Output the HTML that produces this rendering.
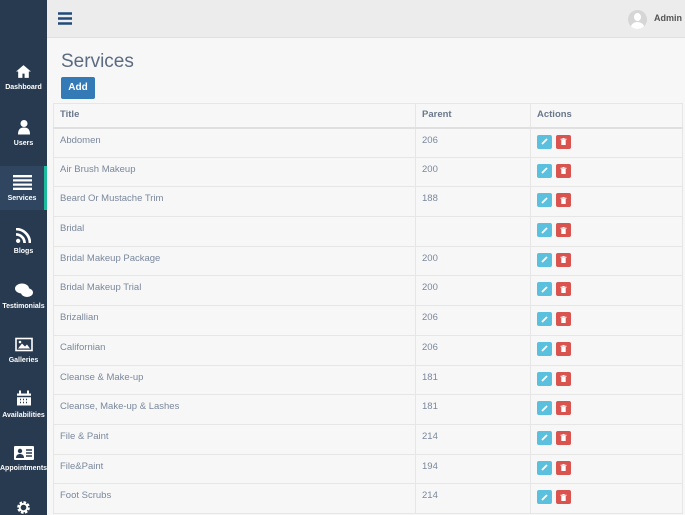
<!DOCTYPE html><html><head><style>
*{margin:0;padding:0;box-sizing:border-box}
html,body{width:685px;height:515px;overflow:hidden}
body{background:#f7f7f7;font-family:"Liberation Sans",sans-serif;position:relative}
.sb{position:absolute;left:0;top:0;width:47px;height:515px;background:#283a50}
.it{position:absolute;left:0;width:47px;height:44px;text-align:center;color:#fff;font-size:7px;font-weight:bold}
.it svg{display:block;margin:0 auto 5px}
.act{background:#2f4560;border-right:3px solid #1abc9c}
.hd{position:absolute;left:47px;top:0;right:0;height:38px;background:#ececec;border-bottom:1px solid #e0e0e0}
h1{position:absolute;left:61px;top:51px;font-size:19px;font-weight:normal;color:#5b6b82}
.add{position:absolute;left:61px;top:77px;width:34px;height:22px;background:#337ab7;color:#fff;font-size:10px;font-weight:bold;text-align:center;line-height:22px;border-radius:2px}
table{position:absolute;left:53px;top:103px;width:630px;border-collapse:collapse;font-size:9.5px;color:#7a889c}
td,th{border:1px solid #e6e6e6;padding:0 6px;text-align:left;vertical-align:top}
th{height:24px;line-height:22px;font-weight:bold;color:#6a788c;border-bottom:2px solid #e0e0e0}
td{height:29.7px;padding-top:6px}
.b{display:inline-block;width:15px;height:14px;border-radius:2px;margin-right:2px;vertical-align:top;margin-top:0;position:relative}
.b svg{position:absolute;left:4px;top:3.5px}
.e{background:#5bc0de}.d{background:#d9534f;margin-left:2px}
</style></head><body>
<div class="sb">
<div class="it" style="top:64px"><svg width="17" height="15" viewBox="0 0 16 14"><path d="M8 1L1 7h2v6h4V9h2v4h4V7h2z" fill="#fff"/></svg>Dashboard</div>
<div class="it" style="top:119px"><svg width="14" height="16" viewBox="0 0 14 15"><circle cx="7" cy="4" r="3.5" fill="#fff"/><path d="M1 15c0-5 2-7 6-7s6 2 6 7z" fill="#fff"/></svg>Users</div>
<div class="it act" style="top:166px;padding-top:9px"><svg width="19" height="15" viewBox="0 0 18 14"><path d="M0 1h18M0 5h18M0 9h18M0 13h18" stroke="#fff" stroke-width="2.2"/></svg>Services</div>
<div class="it" style="top:228px"><svg width="15" height="15" viewBox="0 0 14 14"><circle cx="2" cy="12" r="2" fill="#fff"/><path d="M0 6a8 8 0 0 1 8 8M0 1a13 13 0 0 1 13 13" stroke="#fff" stroke-width="2.5" fill="none"/></svg>Blogs</div>
<div class="it" style="top:283px"><svg width="18" height="15" viewBox="0 0 18 14"><ellipse cx="7" cy="5" rx="7" ry="5" fill="#fff"/><ellipse cx="12" cy="9" rx="6" ry="4.5" fill="#fff"/></svg>Testimonials</div>
<div class="it" style="top:337px"><svg width="18" height="15" viewBox="0 0 18 14"><rect x="1" y="1" width="16" height="12" fill="none" stroke="#fff" stroke-width="1.6"/><path d="M3 11l4-5 3 3 2-2 3 4z" fill="#fff"/><circle cx="5" cy="4.5" r="1.3" fill="#fff"/></svg>Galleries</div>
<div class="it" style="top:390px"><svg width="16" height="17" viewBox="0 0 16 16"><rect x="1" y="3" width="14" height="12" fill="#fff"/><path d="M1 6h14M4 9h1M7 9h1M10 9h1M4 12h1M7 12h1M10 12h1" stroke="#283a50" stroke-width="1.5"/><path d="M4 0v4M12 0v4" stroke="#fff" stroke-width="2"/></svg>Availabilities</div>
<div class="it" style="top:446px"><svg width="20" height="14" viewBox="0 0 20 14"><rect x="0" y="0" width="20" height="14" rx="1" fill="#fff"/><circle cx="6" cy="5" r="2.2" fill="#283a50"/><path d="M2 12c0-3 2-4 4-4s4 1 4 4z" fill="#283a50"/><path d="M12 4h6M12 7h6M12 10h6" stroke="#283a50" stroke-width="1.4"/></svg>Appointments</div>
<div class="it" style="top:500px"><svg width="15" height="15" viewBox="0 0 16 16"><circle cx="8" cy="8" r="5" fill="none" stroke="#fff" stroke-width="3.5" stroke-dasharray="2.5 1.4"/><circle cx="8" cy="8" r="4" fill="none" stroke="#fff" stroke-width="2"/></svg></div>
</div>
<div class="hd">
<svg style="position:absolute;left:11px;top:12px" width="14" height="13" viewBox="0 0 14 13"><path d="M0 1.5h14M0 6.5h14M0 11.5h14" stroke="#1f4a7a" stroke-width="2.5"/></svg>
<div style="position:absolute;left:581px;top:10px;width:19px;height:19px;border-radius:50%;background:#d6d6d6;overflow:hidden"><div style="position:absolute;left:6px;top:3px;width:7px;height:8px;border-radius:50%;background:#fff"></div><div style="position:absolute;left:3px;top:12px;width:13px;height:10px;border-radius:50%;background:#fff"></div></div>
<div style="position:absolute;left:607px;top:13px;font-size:9px;font-weight:bold;color:#555">Admin</div>
</div>
<h1>Services</h1>
<div class="add">Add</div>
<table>
<tr><th style="width:362px">Title</th><th style="width:115px">Parent</th><th>Actions</th></tr>
<tr><td>Abdomen</td><td>206</td><td><span class="b e"><svg width="7" height="7" viewBox="0 0 7 7"><path d="M1 6L6 1" stroke="#fff" stroke-width="1.8"/></svg></span><span class="b d"><svg width="7" height="7" viewBox="0 0 7 7"><path d="M0.5 1.2h6M2.5 0.4h2" stroke="#fff" stroke-width="1"/><rect x="1.3" y="2" width="4.4" height="5" fill="#fff"/></svg></span></td></tr>
<tr><td>Air Brush Makeup</td><td>200</td><td><span class="b e"><svg width="7" height="7" viewBox="0 0 7 7"><path d="M1 6L6 1" stroke="#fff" stroke-width="1.8"/></svg></span><span class="b d"><svg width="7" height="7" viewBox="0 0 7 7"><path d="M0.5 1.2h6M2.5 0.4h2" stroke="#fff" stroke-width="1"/><rect x="1.3" y="2" width="4.4" height="5" fill="#fff"/></svg></span></td></tr>
<tr><td>Beard Or Mustache Trim</td><td>188</td><td><span class="b e"><svg width="7" height="7" viewBox="0 0 7 7"><path d="M1 6L6 1" stroke="#fff" stroke-width="1.8"/></svg></span><span class="b d"><svg width="7" height="7" viewBox="0 0 7 7"><path d="M0.5 1.2h6M2.5 0.4h2" stroke="#fff" stroke-width="1"/><rect x="1.3" y="2" width="4.4" height="5" fill="#fff"/></svg></span></td></tr>
<tr><td>Bridal</td><td></td><td><span class="b e"><svg width="7" height="7" viewBox="0 0 7 7"><path d="M1 6L6 1" stroke="#fff" stroke-width="1.8"/></svg></span><span class="b d"><svg width="7" height="7" viewBox="0 0 7 7"><path d="M0.5 1.2h6M2.5 0.4h2" stroke="#fff" stroke-width="1"/><rect x="1.3" y="2" width="4.4" height="5" fill="#fff"/></svg></span></td></tr>
<tr><td>Bridal Makeup Package</td><td>200</td><td><span class="b e"><svg width="7" height="7" viewBox="0 0 7 7"><path d="M1 6L6 1" stroke="#fff" stroke-width="1.8"/></svg></span><span class="b d"><svg width="7" height="7" viewBox="0 0 7 7"><path d="M0.5 1.2h6M2.5 0.4h2" stroke="#fff" stroke-width="1"/><rect x="1.3" y="2" width="4.4" height="5" fill="#fff"/></svg></span></td></tr>
<tr><td>Bridal Makeup Trial</td><td>200</td><td><span class="b e"><svg width="7" height="7" viewBox="0 0 7 7"><path d="M1 6L6 1" stroke="#fff" stroke-width="1.8"/></svg></span><span class="b d"><svg width="7" height="7" viewBox="0 0 7 7"><path d="M0.5 1.2h6M2.5 0.4h2" stroke="#fff" stroke-width="1"/><rect x="1.3" y="2" width="4.4" height="5" fill="#fff"/></svg></span></td></tr>
<tr><td>Brizallian</td><td>206</td><td><span class="b e"><svg width="7" height="7" viewBox="0 0 7 7"><path d="M1 6L6 1" stroke="#fff" stroke-width="1.8"/></svg></span><span class="b d"><svg width="7" height="7" viewBox="0 0 7 7"><path d="M0.5 1.2h6M2.5 0.4h2" stroke="#fff" stroke-width="1"/><rect x="1.3" y="2" width="4.4" height="5" fill="#fff"/></svg></span></td></tr>
<tr><td>Californian</td><td>206</td><td><span class="b e"><svg width="7" height="7" viewBox="0 0 7 7"><path d="M1 6L6 1" stroke="#fff" stroke-width="1.8"/></svg></span><span class="b d"><svg width="7" height="7" viewBox="0 0 7 7"><path d="M0.5 1.2h6M2.5 0.4h2" stroke="#fff" stroke-width="1"/><rect x="1.3" y="2" width="4.4" height="5" fill="#fff"/></svg></span></td></tr>
<tr><td>Cleanse &amp; Make-up</td><td>181</td><td><span class="b e"><svg width="7" height="7" viewBox="0 0 7 7"><path d="M1 6L6 1" stroke="#fff" stroke-width="1.8"/></svg></span><span class="b d"><svg width="7" height="7" viewBox="0 0 7 7"><path d="M0.5 1.2h6M2.5 0.4h2" stroke="#fff" stroke-width="1"/><rect x="1.3" y="2" width="4.4" height="5" fill="#fff"/></svg></span></td></tr>
<tr><td>Cleanse, Make-up &amp; Lashes</td><td>181</td><td><span class="b e"><svg width="7" height="7" viewBox="0 0 7 7"><path d="M1 6L6 1" stroke="#fff" stroke-width="1.8"/></svg></span><span class="b d"><svg width="7" height="7" viewBox="0 0 7 7"><path d="M0.5 1.2h6M2.5 0.4h2" stroke="#fff" stroke-width="1"/><rect x="1.3" y="2" width="4.4" height="5" fill="#fff"/></svg></span></td></tr>
<tr><td>File &amp; Paint</td><td>214</td><td><span class="b e"><svg width="7" height="7" viewBox="0 0 7 7"><path d="M1 6L6 1" stroke="#fff" stroke-width="1.8"/></svg></span><span class="b d"><svg width="7" height="7" viewBox="0 0 7 7"><path d="M0.5 1.2h6M2.5 0.4h2" stroke="#fff" stroke-width="1"/><rect x="1.3" y="2" width="4.4" height="5" fill="#fff"/></svg></span></td></tr>
<tr><td>File&amp;Paint</td><td>194</td><td><span class="b e"><svg width="7" height="7" viewBox="0 0 7 7"><path d="M1 6L6 1" stroke="#fff" stroke-width="1.8"/></svg></span><span class="b d"><svg width="7" height="7" viewBox="0 0 7 7"><path d="M0.5 1.2h6M2.5 0.4h2" stroke="#fff" stroke-width="1"/><rect x="1.3" y="2" width="4.4" height="5" fill="#fff"/></svg></span></td></tr>
<tr><td>Foot Scrubs</td><td>214</td><td><span class="b e"><svg width="7" height="7" viewBox="0 0 7 7"><path d="M1 6L6 1" stroke="#fff" stroke-width="1.8"/></svg></span><span class="b d"><svg width="7" height="7" viewBox="0 0 7 7"><path d="M0.5 1.2h6M2.5 0.4h2" stroke="#fff" stroke-width="1"/><rect x="1.3" y="2" width="4.4" height="5" fill="#fff"/></svg></span></td></tr>
</table>
</body></html>
